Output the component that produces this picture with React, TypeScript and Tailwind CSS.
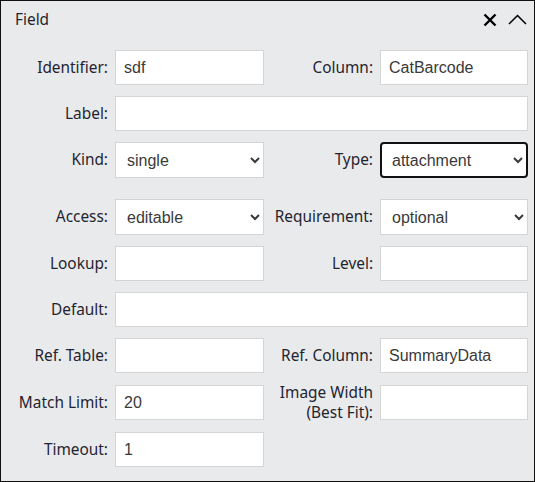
// Field settings panel: two-column form with label/input pairs

const labelCls =
  "text-right text-[15.4px] leading-[20px] text-[#1f2430] [font-family:'Noto_Sans',sans-serif]";
const inputCls =
  "h-[35px] w-full border border-[#d5d5d5] bg-white px-2 text-[16px] text-[#3a3a3a] [font-family:'Liberation_Sans',Arial,sans-serif] outline-none";
const selectCls =
  "h-[36px] w-full border border-[#d5d5d5] bg-white pl-[7px] pr-1 text-[16px] text-[#3a3a3a] [font-family:'Liberation_Sans',Arial,sans-serif] outline-none";
const rowCls = "col-span-4 grid grid-cols-[100px_149px_102px_148px] items-center gap-x-[7px]";

function Label({ children, className = "" }: { children: React.ReactNode; className?: string }) {
  return <label className={`${labelCls} ${className}`}>{children}</label>;
}

export default function App() {
  return (
    <div className="h-[482px] w-[535px] border border-[#111] bg-[#e9eaec]">
      <div className="flex h-[37px] items-center justify-between pl-[14px] pr-[7px]">
        <span className="text-[15.4px] text-[#1f2430] [font-family:'Noto_Sans',sans-serif]">Field</span>
        <div className="flex items-center gap-[11px]">
          <svg width="14" height="14" viewBox="0 0 14 14" className="text-black">
            <path d="M1.5 1.5 12.5 12.5M12.5 1.5 1.5 12.5" stroke="currentColor" strokeWidth="2.4" fill="none" />
          </svg>
          <svg width="19" height="11" viewBox="0 0 19 11" className="text-black">
            <path d="M1 10 9.5 1.5 18 10" stroke="currentColor" strokeWidth="1.5" fill="none" />
          </svg>
        </div>
      </div>

      <div className="mt-[12px] grid grid-cols-[100px_149px_102px_148px] items-center gap-x-[7px] pl-[7px]">
        {/* row: identifier / column */}
        <Label>Identifier:</Label>
        <input className={inputCls} defaultValue="sdf" />
        <Label>Column:</Label>
        <input className={inputCls} defaultValue="CatBarcode" />

        {/* row: label */}
        <div className="col-span-4 mt-[11px] grid grid-cols-[100px_1fr] items-center gap-x-[7px]">
          <Label>Label:</Label>
          <input className={inputCls} />
        </div>

        {/* row: kind / type */}
        <div className={`${rowCls} mt-[11px]`}>
          <Label>Kind:</Label>
          <select className={selectCls} defaultValue="single">
            <option>single</option>
            <option>multiple</option>
          </select>
          <Label>Type:</Label>
          <select
            className="h-[36px] w-full rounded-[4px] border-2 border-[#111] bg-white pl-[6px] pr-[3px] text-[16px] text-[#3a3a3a] [font-family:'Liberation_Sans',Arial,sans-serif] outline-none"
            defaultValue="attachment"
          >
            <option>attachment</option>
            <option>text</option>
          </select>
        </div>

        {/* row: access / requirement */}
        <div className={`${rowCls} mt-[21px]`}>
          <Label>Access:</Label>
          <select className={selectCls} defaultValue="editable">
            <option>editable</option>
            <option>readonly</option>
          </select>
          <Label>Requirement:</Label>
          <select className={selectCls} defaultValue="optional">
            <option>optional</option>
            <option>required</option>
          </select>
        </div>

        {/* row: lookup / level */}
        <div className={`${rowCls} mt-[11px]`}>
          <Label>Lookup:</Label>
          <input className={inputCls} />
          <Label>Level:</Label>
          <input className={inputCls} />
        </div>

        {/* row: default */}
        <div className="col-span-4 mt-[11px] grid grid-cols-[100px_1fr] items-center gap-x-[7px]">
          <Label>Default:</Label>
          <input className={inputCls} />
        </div>

        {/* row: ref table / ref column */}
        <div className={`${rowCls} mt-[11px]`}>
          <Label>Ref. Table:</Label>
          <input className={inputCls} />
          <Label>Ref. Column:</Label>
          <input className={inputCls} defaultValue="SummaryData" />
        </div>

        {/* row: match limit / image width */}
        <div className={`${rowCls} mt-[12px]`}>
          <Label>Match Limit:</Label>
          <input className={inputCls} defaultValue="20" />
          <Label className="-my-[3px]">
            Image Width
            <br />
            (Best Fit):
          </Label>
          <input className={inputCls} />
        </div>

        {/* row: timeout */}
        <div className={`${rowCls} mt-[12px]`}>
          <Label>Timeout:</Label>
          <input className={inputCls} defaultValue="1" />
        </div>
      </div>
    </div>
  );
}
